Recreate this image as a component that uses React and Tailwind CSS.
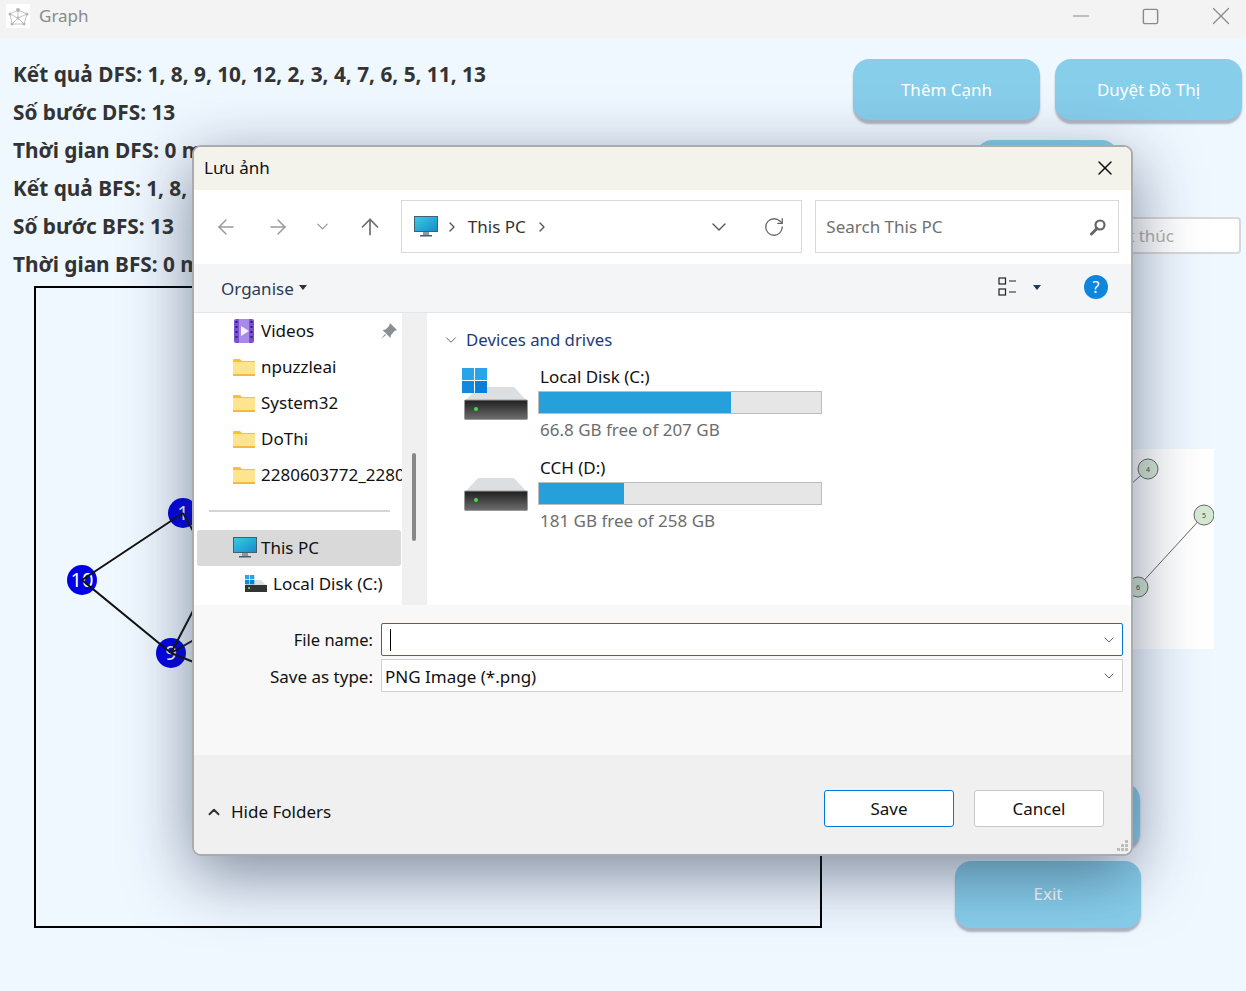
import { ArrowLeft, ArrowRight, ArrowUp, ChevronDown, ChevronRight, ChevronUp, RotateCw, X, Minus, Square } from 'lucide-react';

const KET_QUA = [
  'Kết quả DFS: 1, 8, 9, 10, 12, 2, 3, 4, 7, 6, 5, 11, 13',
  'Số bước DFS: 13',
  'Thời gian DFS: 0 ms',
  'Kết quả BFS: 1, 8, 10, 12, 9, 2, 3, 4, 7, 6, 5, 11, 13',
  'Số bước BFS: 13',
  'Thời gian BFS: 0 ms',
];

const PASTAS = ['npuzzleai', 'System32', 'DoThi', '2280603772_2280603772'];

function AppIcon() {
  return (
    <svg width="24" height="24" viewBox="0 0 24 24" className="bg-white">
      <g stroke="#c4c4c4" strokeWidth="1" fill="none">
        <path d="M12 6 L4 10 L6 20 L18 20 L21 10 Z M12 6 L12 14 M4 10 L12 14 L21 10 M6 20 L12 14 L18 20" />
      </g>
      <g fill="#b5b5b5">
        <circle cx="12" cy="6" r="2" />
        <circle cx="4" cy="10" r="1.5" />
        <circle cx="21" cy="10" r="1.5" />
        <circle cx="6" cy="20" r="1.5" />
        <circle cx="18" cy="20" r="1.5" />
        <circle cx="12" cy="14" r="1.5" />
      </g>
    </svg>
  );
}

function Folder() {
  return (
    <svg width="22" height="18" viewBox="0 0 22 18" className="shrink-0">
      <path d="M0 2 a1 1 0 0 1 1-1 h6 l2 2 h13 v14 a1 1 0 0 1 -1 1 h-20 a1 1 0 0 1 -1-1 z" fill="#fbc02d" />
      <rect x="0" y="4" width="22" height="13" fill="#ffe48f" />
      <rect x="0" y="16" width="22" height="2" fill="#f6b93b" />
    </svg>
  );
}

function VideoIcon() {
  return (
    <svg width="20" height="24" viewBox="0 0 20 24" className="shrink-0">
      <rect width="20" height="24" rx="2" fill="#7b4fd6" />
      <rect x="5" y="0" width="10" height="24" fill="#a98ae8" />
      <path d="M7 7 L15 12 L7 17 Z" fill="#f4f0ff" />
      <g fill="#33206b">
        <rect x="1.5" y="2" width="2" height="2" />
        <rect x="1.5" y="7" width="2" height="2" />
        <rect x="1.5" y="12" width="2" height="2" />
        <rect x="1.5" y="17" width="2" height="2" />
        <rect x="16.5" y="2" width="2" height="2" />
        <rect x="16.5" y="7" width="2" height="2" />
        <rect x="16.5" y="12" width="2" height="2" />
        <rect x="16.5" y="17" width="2" height="2" />
      </g>
    </svg>
  );
}

function MonitorIcon() {
  return (
    <svg width="24" height="22" viewBox="0 0 24 22" className="shrink-0">
      <defs>
        <linearGradient id="tela" x1="0" y1="0" x2="1" y2="1">
          <stop offset="0" stopColor="#35d0e6" />
          <stop offset="1" stopColor="#1689c9" />
        </linearGradient>
      </defs>
      <rect x="0.5" y="0.5" width="23" height="15" fill="url(#tela)" stroke="#44606e" />
      <rect x="9" y="16" width="6" height="3" fill="#8a9aa3" />
      <rect x="6" y="19" width="12" height="1.5" fill="#44606e" />
    </svg>
  );
}

function WinLogo({ size }) {
  return (
    <svg width={size} height={size} viewBox="0 0 24 24" className="shrink-0">
      <rect width="11.5" height="11.5" fill="#29a4ea" />
      <rect x="12.5" width="11.5" height="11.5" fill="#29a4ea" />
      <rect y="12.5" width="11.5" height="11.5" fill="#1089df" />
      <rect x="12.5" y="12.5" width="11.5" height="11.5" fill="#0b7fd8" />
    </svg>
  );
}

function Drive() {
  return (
    <svg width="64" height="33" viewBox="0 0 64 33">
      <defs>
        <linearGradient id="hd" x1="0" y1="0" x2="0" y2="1">
          <stop offset="0" stopColor="#1f1f1f" />
          <stop offset="1" stopColor="#6e6e6e" />
        </linearGradient>
      </defs>
      <path d="M14 0 H50 L63 14 H1 Z" fill="#dcdfe2" />
      <rect x="0.5" y="13" width="63" height="19.5" rx="1" fill="url(#hd)" stroke="#9a9a9a" />
      <circle cx="12" cy="22" r="2" fill="#3fe03f" />
    </svg>
  );
}

function DriveMini() {
  return (
    <svg width="22" height="18" viewBox="0 0 22 18" className="shrink-0">
      <path d="M5 5 H16 L22 11 H0 Z" fill="#dcdfe2" />
      <rect x="0" y="10" width="22" height="7" fill="#333" />
      <rect x="3" y="12" width="2" height="2" fill="#3fe03f" />
      <rect x="0" y="0" width="4.3" height="4.3" fill="#29a4ea" />
      <rect x="5" y="0" width="4.3" height="4.3" fill="#29a4ea" />
      <rect x="0" y="5" width="4.3" height="4.3" fill="#1089df" />
      <rect x="5" y="5" width="4.3" height="4.3" fill="#0b7fd8" />
    </svg>
  );
}

function AppButton({ children, className }) {
  return (
    <button className={`bg-[#87ceeb] text-white text-[17px] rounded-[16px] shadow-[0_4px_2px_rgba(120,130,145,0.55)] ${className}`}>
      {children}
    </button>
  );
}

function Grafo() {
  return (
    <svg className="absolute inset-0" width="784" height="638" viewBox="0 0 784 638">
      <circle cx="147" cy="225" r="15" fill="#0000e6" />
      <circle cx="46" cy="292" r="15" fill="#0000e6" />
      <circle cx="135" cy="365" r="15" fill="#0000e6" />
      <g fill="#fff" fontSize="20" textAnchor="middle" fontFamily="'Noto Sans', sans-serif">
        <text x="147" y="232">1</text>
        <text x="46" y="299">10</text>
        <text x="135" y="372">9</text>
      </g>
      <g stroke="#111" strokeWidth="2" fill="none">
        <path d="M147 225 L46 292 L135 365" />
        <path d="M147 225 L170 266" />
        <path d="M135 365 L170 298" />
        <path d="M135 365 L170 345" />
        <path d="M135 365 L170 379" />
      </g>
    </svg>
  );
}

function MiniGrafo() {
  return (
    <svg width="364" height="200" viewBox="0 0 364 200" className="bg-white">
      <g stroke="#666" strokeWidth="1" fill="none">
        <path d="M259 52 L295 20" />
        <path d="M285 138 L351 66" />
      </g>
      <g fill="#d5e8d4" stroke="#666" strokeWidth="1">
        <circle cx="295" cy="20" r="10" />
        <circle cx="351" cy="66" r="10" />
        <circle cx="285" cy="138" r="10" />
      </g>
      <g fill="#444" fontSize="7" textAnchor="middle" fontFamily="'Noto Sans', sans-serif">
        <text x="295" y="23">4</text>
        <text x="351" y="69">5</text>
        <text x="285" y="141">6</text>
      </g>
    </svg>
  );
}

function LinhaPasta({ icon, children, className = '', extra }) {
  return (
    <div className={`h-9 flex items-center whitespace-nowrap overflow-hidden text-[17px] text-[#111] ${className}`}>
      {icon}
      <span>{children}</span>
      {extra}
    </div>
  );
}

function DriveRow({ logo, nome, livre, pct, className = '' }) {
  return (
    <div className={`relative flex items-start ${className}`}>
      <div className="w-[76px] pt-[18px] pl-[2px]">
        <Drive />
      </div>
      {logo && (
        <div className="absolute left-0 top-[-1px]">
          <WinLogo size={25} />
        </div>
      )}
      <div className="flex flex-col">
        <div className="h-[22px] leading-[16px] pl-[2px] text-[17px] text-[#111]">{nome}</div>
        <div className="w-[284px] h-[23px] bg-[#e6e6e6] border border-[#bcbcbc]">
          <div className="h-full bg-[#26a0da]" style={{ width: pct }} />
        </div>
        <div className="mt-[4px] leading-[24px] pl-[2px] text-[17px] text-[#6d6d6d]">{livre}</div>
      </div>
    </div>
  );
}

function DialogoSalvar() {
  return (
    <div className="absolute left-[192px] top-[145px] w-[941px] h-[711px] flex flex-col overflow-hidden rounded-[9px] border-2 border-[#a9abae] shadow-[0_18px_65px_rgba(35,50,75,0.56)] bg-white">
      <div className="h-[43px] shrink-0 flex items-center justify-between pl-[10px] pr-[14px] pb-[1px] bg-[#f3f3ec] text-[17px] text-[#111]">
        <span>Lưu ảnh</span>
        <X size={24} strokeWidth={1.5} color="#111" />
      </div>

      <div className="h-[74px] shrink-0 flex items-center bg-white pr-[12px] pb-[1px]">
        <div className="w-[207px] flex items-center pl-[20px] text-[#9a9a9a]">
          <ArrowLeft size={24} strokeWidth={1.5} />
          <ArrowRight size={24} strokeWidth={1.5} className="ml-[28px]" />
          <ChevronDown size={19} strokeWidth={1.6} className="ml-[23px]" />
          <ArrowUp size={26} strokeWidth={1.6} color="#707070" className="ml-[25px]" />
        </div>
        <div className="w-[402px] h-[53px] flex items-center border border-[#d9d9d9] pl-[12px] pr-[16px] text-[17px] text-[#333]">
          <MonitorIcon />
          <ChevronRight size={16} className="ml-[6px] text-[#555]" />
          <span className="ml-[8px]">This PC</span>
          <ChevronRight size={16} className="ml-[8px] text-[#555]" />
          <ChevronDown size={24} strokeWidth={1.4} className="ml-auto text-[#555]" />
          <RotateCw size={22} strokeWidth={1.4} className="ml-[32px] text-[#666]" />
        </div>
        <div className="ml-[13px] w-[304px] h-[53px] flex items-center justify-between border border-[#d9d9d9] pl-[10px] pr-[11px] text-[17px] text-[#6f6f6f]">
          <span>Search This PC</span>
          <svg width="18" height="18" viewBox="0 0 18 18" fill="none" stroke="#666">
            <circle cx="11" cy="7" r="4.5" strokeWidth="2.2" />
            <path d="M8 10.5 L2.5 16" strokeWidth="3" strokeLinecap="round" />
          </svg>
        </div>
      </div>

      <div className="h-[49px] shrink-0 flex items-center bg-[#f4f5f7] border-b border-[#e4e4e4] pl-[27px] pr-[23px] pb-[2px]">
        <span className="mt-[4px] text-[17px] text-[#2b3a55]">Organise</span>
        <span className="ml-[5px] w-0 h-0 border-x-[4px] border-x-transparent border-t-[5px] border-t-[#333]" />
        <svg width="20" height="20" viewBox="0 0 20 20" className="ml-auto" fill="none" stroke="#222" strokeWidth="1.2">
          <rect x="1" y="1" width="6.5" height="6" />
          <rect x="1" y="12" width="6.5" height="6" />
          <path d="M11 4 H18 M11 15 H18" />
        </svg>
        <span className="ml-[15px] w-0 h-0 border-x-[4px] border-x-transparent border-t-[5px] border-t-[#1f3864]" />
        <span className="ml-[43px] w-6 h-6 rounded-full bg-[#0f86dc] text-white text-[16px] leading-6 text-center">?</span>
      </div>

      <div className="h-[292px] shrink-0 flex overflow-hidden">
        <div className="w-[208px] shrink-0 overflow-hidden">
          <LinhaPasta
            className="pl-[40px] pr-[4px] gap-[7px]"
            icon={<VideoIcon />}
            extra={
              <svg width="18" height="18" viewBox="0 0 18 18" className="ml-auto" fill="#8a8f94">
                <path d="M10 1 L17 8 L14.5 9 L11 13 L10.5 16 L2.5 8 L5.5 7.5 L9 4 Z M5 12 L1 17 L6 13 Z" />
              </svg>
            }
          >
            Videos
          </LinhaPasta>
          {PASTAS.map(p => (
            <LinhaPasta key={p} className="pl-[39px] gap-[6px]" icon={<Folder />}>{p}</LinhaPasta>
          ))}
          <div className="ml-[15px] mr-[12px] mt-[17px] mb-[18px] h-[2px] bg-[#d5d5d5]" />
          <LinhaPasta className="ml-[3px] w-[204px] pl-[36px] gap-[4px] bg-[#d9d9d9] rounded-[3px]" icon={<MonitorIcon />}>This PC</LinhaPasta>
          <LinhaPasta className="pl-[51px] gap-[6px]" icon={<DriveMini />}>
            Local Disk (C:)
          </LinhaPasta>
        </div>
        <div className="w-[25px] shrink-0 bg-[#f0f0f0] pt-[140px] pl-[10px]">
          <div className="w-[4px] h-[88px] rounded-full bg-[#888]" />
        </div>
        <div className="flex-1 ml-[3px] pt-[14px] pl-[12px]">
          <div className="flex items-center gap-[6px] text-[16.8px] text-[#1f3a75] h-[26px]">
            <ChevronDown size={18} strokeWidth={1.3} className="text-[#666]" />
            <span>Devices and drives</span>
          </div>
          <DriveRow className="mt-[16px] ml-[20px]" logo nome="Local Disk (C:)" livre="66.8 GB free of 207 GB" pct="68%" />
          <DriveRow className="mt-[18px] ml-[20px]" nome="CCH (D:)" livre="181 GB free of 258 GB" pct="30%" />
        </div>
      </div>

      <div className="h-[150px] shrink-0 bg-[#f8f8f8] pt-[18px] pr-[8px] flex flex-col gap-[3px] text-[17px] text-[#111]">
        <div className="flex items-center h-[33px]">
          <span className="w-[179px] mt-[2px] text-right shrink-0 text-[16.5px]">File name:</span>
          <div className="ml-[8px] flex-1 h-[33px] flex items-center justify-between border border-[#0078d4] bg-white pl-[8px] pr-[5px] rounded-[2px]">
            <span className="w-px h-[22px] bg-black" />
            <ChevronDown size={16} strokeWidth={1.4} className="text-[#555]" />
          </div>
        </div>
        <div className="flex items-center h-[33px]">
          <span className="w-[179px] mt-[2px] text-right shrink-0">Save as type:</span>
          <div className="ml-[8px] flex-1 h-[33px] flex items-center justify-between border border-[#d0d0d0] bg-white pl-[3px] pr-[5px]">
            <span className="mt-[2px]">PNG Image (*.png)</span>
            <ChevronDown size={16} strokeWidth={1.4} className="text-[#555]" />
          </div>
        </div>
      </div>

      <div className="relative flex-1 bg-[#f0f0f0] flex items-center pl-[11px] pr-[27px] pt-[8px]">
        <div className="flex items-center mt-[7px]">
          <ChevronUp size={18} strokeWidth={2.6} className="text-[#333]" />
          <span className="ml-[8px] text-[17px] text-[#111]">Hide Folders</span>
        </div>
        <button className="ml-auto w-[130px] h-[37px] rounded-[3px] border border-[#0078d4] bg-white text-[17px] text-[#111]">Save</button>
        <button className="ml-[20px] w-[130px] h-[37px] rounded-[3px] border border-[#c8c8c8] bg-white text-[17px] text-[#111]">Cancel</button>
        <svg width="12" height="12" viewBox="0 0 12 12" className="absolute right-[2px] bottom-[2px]" fill="#bdbdbd">
          <rect x="8" y="0" width="3" height="3" />
          <rect x="4" y="4" width="3" height="3" />
          <rect x="8" y="4" width="3" height="3" />
          <rect x="0" y="8" width="3" height="3" />
          <rect x="4" y="8" width="3" height="3" />
          <rect x="8" y="8" width="3" height="3" />
        </svg>
      </div>
    </div>
  );
}

export default function App() {
  return (
    <div className="relative w-[1246px] h-[991px] overflow-hidden bg-[#eff7ff] font-['Noto_Sans',sans-serif]">
      <div className="h-[38px] flex items-center bg-[#f3f3f3] pl-[6px] pr-[10px] pb-[6px] text-[#8a8a8a]">
        <AppIcon />
        <span className="ml-[9px] text-[17px]">Graph</span>
        <Minus size={26} strokeWidth={1} className="ml-auto" />
        <Square size={19} strokeWidth={1.8} className="ml-[47px]" />
        <X size={30} strokeWidth={1} className="ml-[46px]" />
      </div>

      <div className="flex">
        <div className="w-[853px] shrink-0 pt-[17px] pl-[13px]">
          {KET_QUA.map(linha => (
            <div key={linha} className="h-[38px] leading-[38px] font-bold text-[20.8px] text-[#333] whitespace-nowrap">{linha}</div>
          ))}
          <div className="relative mt-[3px] ml-[21px] w-[788px] h-[642px] border-2 border-black">
            <Grafo />
          </div>
        </div>

        <div className="flex-1 flex flex-col pt-[21px]">
          <div className="flex gap-[15px]">
            <AppButton className="w-[187px] h-[61px]">Thêm Cạnh</AppButton>
            <AppButton className="w-[187px] h-[61px]">Duyệt Đồ Thị</AppButton>
          </div>
          <AppButton className="mt-[20px] ml-[123px] w-[142px] h-[60px]" />
          <div className="mt-[17px] ml-[150px] w-[238px] h-[37px] flex items-center justify-end pr-[65px] bg-white border-2 border-[#d8d8d8] rounded-[4px] text-[17px] text-[#b0b0b0]">
            Kết thúc
          </div>
          <div className="mt-[195px] w-[361px] h-[200px] overflow-hidden">
            <MiniGrafo />
          </div>
          <AppButton className="mt-[134px] ml-[102px] w-[185px] h-[64px]" />
          <AppButton className="mt-[14px] ml-[102px] w-[186px] h-[67px] pb-[2px]">Exit</AppButton>
        </div>
      </div>

      <DialogoSalvar />
    </div>
  );
}
